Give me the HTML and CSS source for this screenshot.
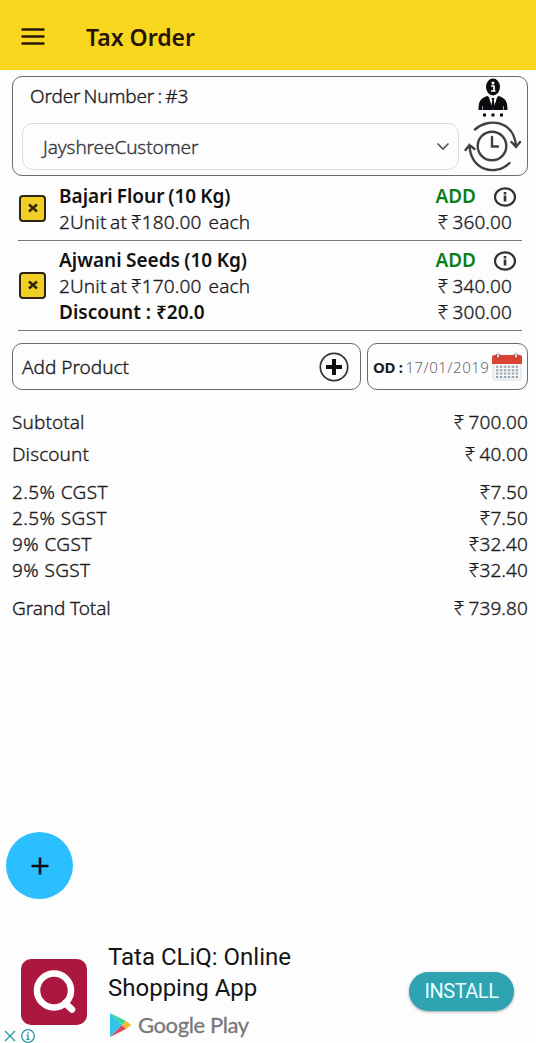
FILE: index.html
```
<!DOCTYPE html>
<html lang="en">
<head>
    <meta charset="UTF-8">
    <title>Tax Order</title>
    <link rel="stylesheet" href="styles.css">
</head>
<body>
    <header class="toolbar">
        <svg class="menu-icon" width="24" height="18" viewBox="0 0 24 18">
            <path d="M1.500 1.500h21M1.500 8.500h21M1.500 15.500h21" stroke="#2a1a08" stroke-width="2.400" stroke-linecap="round"/>
        </svg>
        <h1>Tax Order</h1>
    </header>

    <main>
        <section class="order-card">
            <div class="order-main">
                <div class="order-number">Order Number : #3</div>
                <div class="customer-select">
                    <span class="customer-name">JayshreeCustomer</span>
                    <svg width="14" height="9" viewBox="0 0 14 9"><path d="M1.500 1.500L7 7l5.500-5.500" fill="none" stroke="#555" stroke-width="1.600"/></svg>
                </div>
            </div>
            <div class="order-icons">
                <svg class="person-icon" width="32" height="40" viewBox="0 0 32 40">
                    <ellipse cx="16" cy="9" rx="7" ry="8.500" fill="#0c0c10"/>
                    <circle cx="16" cy="5" r="1.500" fill="#fff"/>
                    <path d="M14 8h3v5h1.500M14 13h3" fill="none" stroke="#fff" stroke-width="1.700"/>
                    <path d="M1.500 32c0-9 2-11.500 8.500-14l6 3 6-3c6.500 2.500 8.500 5 8.500 14z" fill="#0c0c10"/>
                    <path d="M11.500 18L16 32l4.500-14L16 21z" fill="#fff"/>
                    <path d="M14.600 20h2.800l-.6 2.500 1 6L16 32l-1.800-3.500 1-6z" fill="#0c0c10"/>
                    <path d="M5.500 28v4M26.500 28v4" stroke="#fff" stroke-width=".6"/>
                    <path d="M6 35.500h3v3h-3zM14.500 35.500h3v3h-3zM23 35.500h3v3h-3z" fill="#0c0c10"/>
                </svg>
                <svg class="history-icon" width="58" height="52" viewBox="0 0 58 52">
                    <g fill="none" stroke="#3f3f44" stroke-width="2.400" stroke-linecap="round">
                        <circle cx="28" cy="26" r="14.300"/>
                        <path d="M28 17v9.500h6"/>
                        <path d="M11 9.500C25-3 50 1 52 26M47.500 22l4.500 5 4-5"/>
                        <path d="M45.500 43C31 57 6 50 5.500 25M1.500 30l4-5 5 4"/>
                    </g>
                </svg>
            </div>
        </section>

        <section class="items">
            <article class="item">
                <span class="remove"><svg width="10" height="10" viewBox="0 0 10 10"><path d="M1 1.500l8 7M9 1.500l-8 7" stroke="#33290a" stroke-width="2.500"/></svg></span>
                <div class="item-text">
                    <div class="item-name">Bajari Flour (10 Kg)</div>
                    <div class="item-unit">2Unit at <span class="price">₹180.00</span>&nbsp; each</div>
                </div>
                <div class="item-side">
                    <div class="item-actions">
                        <b class="add">ADD</b>
                        <svg width="24" height="22" viewBox="0 0 24 22"><ellipse cx="12" cy="11" rx="10" ry="8.700" fill="none" stroke="#333" stroke-width="2.200"/><path d="M12 6v2.500M12 9.500v6" stroke="#333" stroke-width="2.600"/></svg>
                    </div>
                    <div class="amount">₹ 360.00</div>
                </div>
            </article>
            <article class="item item-discounted">
                <span class="remove"><svg width="10" height="10" viewBox="0 0 10 10"><path d="M1 1.500l8 7M9 1.500l-8 7" stroke="#33290a" stroke-width="2.500"/></svg></span>
                <div class="item-text">
                    <div class="item-name name-seeds">Ajwani Seeds (10 Kg)</div>
                    <div class="item-unit">2Unit at <span class="price">₹170.00</span>&nbsp; each</div>
                    <div class="item-discount">Discount : ₹20.0</div>
                </div>
                <div class="item-side">
                    <div class="item-actions">
                        <b class="add">ADD</b>
                        <svg width="24" height="22" viewBox="0 0 24 22"><ellipse cx="12" cy="11" rx="10" ry="8.700" fill="none" stroke="#333" stroke-width="2.200"/><path d="M12 6v2.500M12 9.500v6" stroke="#333" stroke-width="2.600"/></svg>
                    </div>
                    <div class="amount">₹ 340.00</div>
                    <div class="amount">₹ 300.00</div>
                </div>
            </article>
        </section>

        <section class="add-row">
            <div class="add-product">
                <span class="add-label">Add Product</span>
                <svg width="30" height="30" viewBox="0 0 30 30"><circle cx="15" cy="15" r="13.700" fill="none" stroke="#333" stroke-width="1.700"/><path d="M15 7v16M7 15h16" stroke="#111" stroke-width="4"/></svg>
            </div>
            <div class="order-date">
                <span class="od">OD :</span>
                <span class="date">17/01/2019</span>
                <svg width="30" height="29" viewBox="0 0 30 29">
                    <path d="M1 10h28v16.500q0 1.500-1.500 1.500h-25Q1 28 1 26.500z" fill="#f4f6f7" stroke="#cfd6d9" stroke-width=".8"/>
                    <path d="M0 12V5q0-2 2-2h26q2 0 2 2v7z" fill="#dc4234"/>
                    <circle cx="6" cy="4" r="2.500" fill="#a73a30"/><circle cx="24" cy="4" r="2.500" fill="#a73a30"/>
                    <path d="M6 1.500v3M24 1.500v3" stroke="#d6cfca" stroke-width="2.500" stroke-linecap="round"/>
                    <path d="M4 14.800h22M4 18.200h22M4 21.600h22M4 25h22" stroke="#98a5ac" stroke-width="2" stroke-dasharray="2.400 1.520"/>
                </svg>
            </div>
        </section>

        <section class="totals">
            <div class="total-row subtotal"><span>Subtotal</span><span class="sum">₹ 700.00</span></div>
            <div class="total-row discount"><span>Discount</span><span class="sum">₹ 40.00</span></div>
            <div class="total-row tax"><span>2.5% CGST</span><span class="sum">₹7.50</span></div>
            <div class="total-row tax"><span>2.5% SGST</span><span class="sum">₹7.50</span></div>
            <div class="total-row tax"><span>9% CGST</span><span class="sum">₹32.40</span></div>
            <div class="total-row tax"><span>9% SGST</span><span class="sum">₹32.40</span></div>
            <div class="total-row grand-total"><span>Grand Total</span><span class="sum">₹ 739.80</span></div>
        </section>
    </main>

    <div class="fab">
        <svg width="18" height="18" viewBox="0 0 18 18"><path d="M9 .5v17M.5 9h17" stroke="#111" stroke-width="2.600"/></svg>
    </div>

    <footer class="ad">
        <svg class="ad-logo" width="66" height="66" viewBox="0 0 66 66">
            <rect width="66" height="66" rx="10" fill="#ac1740"/>
            <circle cx="33" cy="31.500" r="17" fill="none" stroke="#fff" stroke-width="6.500"/>
            <path d="M44 44l7 6.500" stroke="#fff" stroke-width="6.500" stroke-linecap="round"/>
        </svg>
        <div class="ad-text">
            <div class="ad-title">Tata CLiQ: Online</div>
            <div class="ad-title">Shopping App</div>
            <div class="store">
                <svg width="22" height="26" viewBox="0 0 22 26">
                    <path d="M0 1v24l12-12z" fill="#35c4e8"/>
                    <path d="M0 1l12 12 4-4z" fill="#35d6a0"/>
                    <path d="M0 25l12-12 4 4z" fill="#d94a60"/>
                    <path d="M12 13l4-4 5.500 4-5.500 4z" fill="#f6b833"/>
                </svg>
                <span class="store-name">Google Play</span>
            </div>
        </div>
        <span class="install">INSTALL</span>
        <svg class="ad-choices" width="34" height="14" viewBox="0 0 34 14">
            <g fill="none" stroke="#2c98a4" stroke-width="1.300">
                <path d="M1 2l10 10M11 2L1 12"/>
                <circle cx="24" cy="7" r="6.300"/>
                <path d="M24 3v1.600M22.500 6.200H24v4.200M22.300 10.400h3.400"/>
            </g>
        </svg>
    </footer>
</body>
</html>
```
FILE: styles.css
```
* {
    box-sizing: border-box;
}
body {
    margin: 0;
    height: 1043px;
    display: flex;
    flex-direction: column;
    background: #fefdfe;
    color: #1c1c1e;
    font-family: "Noto Sans", "Open Sans", sans-serif;
    font-size: 19px;
    font-weight: 300;
    line-height: 26px;
    white-space: nowrap;
    overflow: hidden;
}
svg {
    display: block;
    flex-shrink: 0;
}
.toolbar {
    height: 70px;
    display: flex;
    align-items: center;
    padding: 3px 0 0 21px;
    background: #f8d71e;
}
h1 {
    margin: 0 0 0 41px;
    font-size: 23px;
    font-weight: 600;
    color: #241508;
}
main {
    padding: 6px 8px 0 12px;
}
.order-number,
.customer-name,
.item-unit,
.amount,
.add-label,
.totals {
    -webkit-text-stroke: 0.35px currentColor;
}
.order-card {
    height: 100px;
    display: flex;
    justify-content: space-between;
    padding: 6px 5px 0 9px;
    border: 1px solid #6b6b70;
    border-radius: 10px;
}
.order-number {
    padding-left: 8px;
    letter-spacing: -0.15px;
    word-spacing: -1.5px;
}
.customer-select {
    width: 437px;
    height: 47px;
    margin-top: 14px;
    display: flex;
    align-items: center;
    justify-content: space-between;
    padding: 0 8px 0 20px;
    border: 1px solid #dcdce0;
    border-radius: 11px;
    color: #36363a;
}
.customer-name {
    letter-spacing: -0.1px;
}
.order-icons {
    display: flex;
    flex-direction: column;
    align-items: center;
    margin-top: -5px;
}
.history-icon {
    margin-top: 2px;
}
.items {
    margin: 0 6px;
}
.item {
    display: flex;
    align-items: center;
    padding: 7px 0 5px 1px;
    border-bottom: 1px solid #77777c;
}
.item-discounted {
    padding-top: 6px;
}
.remove {
    width: 27px;
    height: 27px;
    margin-top: -2px;
    display: flex;
    align-items: center;
    justify-content: center;
    background: #f2cf25;
    border: 2px solid #2b2414;
    border-radius: 4px;
}
.item-text {
    flex: 1;
    margin-left: 13px;
}
.item-name,
.item-discount {
    font-weight: 600;
    color: #111;
}
.item-name {
    word-spacing: -1px;
}
.name-seeds {
    word-spacing: -0.5px;
}
.item-unit {
    letter-spacing: 0.15px;
    word-spacing: -1.5px;
}
.item-side {
    text-align: right;
    padding-right: 10px;
}
.amount {
    letter-spacing: 0.1px;
    word-spacing: -1px;
}
.item-actions {
    height: 26px;
    display: flex;
    justify-content: flex-end;
    align-items: center;
    gap: 17px;
    margin-right: -5px;
}
.item-actions svg {
    margin-top: 2px;
}
.add {
    color: #0e7d18;
    font-weight: 600;
}
.add-row {
    display: flex;
    gap: 6px;
    margin-top: 12px;
}
.add-product,
.order-date {
    height: 47px;
    display: flex;
    align-items: center;
    border: 1px solid #6b6b70;
    border-radius: 10px;
}
.add-product {
    width: 349px;
    justify-content: space-between;
    padding: 0 11px 0 9px;
}
.order-date {
    width: 161px;
    padding: 0 5px;
    justify-content: space-between;
}
.od {
    font-size: 15px;
    font-weight: 700;
    letter-spacing: -0.3px;
}
.date {
    font-size: 15px;
    font-weight: 300;
    letter-spacing: 0.5px;
    color: #66666a;
}
.totals {
    margin-top: 19px;
}
.total-row {
    display: flex;
    justify-content: space-between;
    letter-spacing: 0.1px;
}
.tax {
    letter-spacing: 0.4px;
}
.sum {
    letter-spacing: 0.1px;
    word-spacing: -1px;
}
.subtotal {
    margin-bottom: 6px;
}
.discount,
.total-row:nth-child(6) {
    margin-bottom: 12px;
}
.grand-total {
    letter-spacing: -0.1px;
}
.fab {
    width: 67px;
    height: 67px;
    margin: auto 0 0 6px;
    flex-shrink: 0;
    display: flex;
    align-items: center;
    justify-content: center;
    border-radius: 50%;
    background: #2bbfff;
}
.ad {
    position: relative;
    height: 101px;
    flex-shrink: 0;
    margin-top: 43px;
    display: flex;
    align-items: flex-start;
    padding: 0 22px 0 21px;
    font-family: Roboto, sans-serif;
    font-weight: 400;
}
.ad-logo {
    margin-top: 17px;
}
.ad-text {
    flex: 1;
    margin-left: 21px;
}
.ad-title {
    font-size: 24px;
    line-height: 31px;
    color: #151515;
}
.store {
    display: flex;
    align-items: center;
    gap: 6px;
    margin-top: 8px;
    padding-left: 2px;
}
.store-name {
    font-family: Lato, sans-serif;
    font-size: 22px;
    letter-spacing: -0.4px;
    color: #77777a;
    -webkit-text-stroke: 0.3px #77777a;
}
.install {
    width: 105px;
    height: 39px;
    margin-top: 30px;
    border-radius: 20px;
    background: #2ea4b2;
    color: #e8ffff;
    font-size: 20px;
    letter-spacing: -0.5px;
    line-height: 38px;
    text-align: center;
    box-shadow: 0 1px 3px rgba(0, 0, 0, 0.35);
}
.ad-choices {
    position: absolute;
    left: 4px;
    bottom: 0;
}
```
